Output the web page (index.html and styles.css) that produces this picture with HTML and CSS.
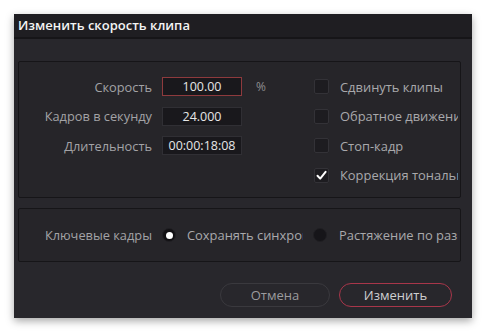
FILE: index.html
```html
<!DOCTYPE html>
<html lang="ru">
<head>
<meta charset="utf-8">
<title>Изменить скорость клипа</title>
<link rel="stylesheet" href="styles.css">
</head>
<body>
<div class="dialog">
  <div class="titlebar">Изменить скорость клипа</div>
  <div class="content">
    <div class="panel panel-top">
      <div class="label">Скорость</div>
      <div class="field field-active">100.00</div>
      <div class="unit">%</div>
      <div class="check"></div>
      <div class="opt">Сдвинуть клипы</div>

      <div class="label">Кадров в секунду</div>
      <div class="field">24.000</div>
      <div class="unit"></div>
      <div class="check"></div>
      <div class="opt">Обратное движение</div>

      <div class="label">Длительность</div>
      <div class="field">00:00:18:08</div>
      <div class="unit"></div>
      <div class="check"></div>
      <div class="opt">Стоп-кадр</div>

      <div class="label"></div>
      <div></div>
      <div></div>
      <div class="check checked"><svg viewBox="0 0 15 15" width="15" height="15"><path d="M3.5 7.8 L6.2 10.6 L11.6 3.8" fill="none" stroke="#ffffff" stroke-width="2" stroke-linecap="round" stroke-linejoin="round"/></svg></div>
      <div class="opt">Коррекция тональности</div>
    </div>
    <div class="panel panel-bottom">
      <div class="label">Ключевые кадры</div>
      <div class="radio selected"></div>
      <div class="opt opt-mid">Сохранять синхронизацию</div>
      <div class="radio"></div>
      <div class="opt">Растяжение по размеру</div>
    </div>
    <div class="buttons">
      <div class="btn btn-cancel">Отмена</div>
      <div class="btn btn-ok">Изменить</div>
    </div>
  </div>
</div>
</body>
</html>
```

FILE: styles.css
```css
* { box-sizing: border-box; }
html, body { margin: 0; padding: 0; background: #ffffff; }
body {
  font-family: "Open Sans", "Noto Sans", sans-serif;
  font-size: 12.8px;
  padding: 14px;
}
.dialog {
  width: 458px;
  height: 304px;
  background: #28272c;
  box-shadow: 0 3px 8px rgba(0, 0, 0, 0.35);
}
.titlebar {
  height: 25px;
  line-height: 23px;
  background: #1f1e22;
  border-bottom: 2px solid #161518;
  color: #f4f4f4;
  font-size: 13px;
  font-weight: 600;
  padding-left: 4px;
}
.content {
  padding: 22px 11px 0 4px;
}
.panel {
  background: #262529;
  border: 1px solid #161518;
  border-radius: 2px;
  display: grid;
  align-items: center;
}
.panel-top {
  height: 137px;
  padding-top: 15px;
  grid-template-columns: 133px 80px 52px 15px 1fr;
  grid-template-rows: repeat(4, 19px);
  column-gap: 10px;
  row-gap: 10.5px;
  align-content: start;
}
.panel-bottom {
  margin-top: 10px;
  height: 54px;
  grid-template-columns: 133px 14px 117px 14px 1fr;
  column-gap: 10px;
}
.label {
  text-align: right;
  color: #a3a3a6;
  white-space: nowrap;
  font-size: 12.8px;
}
.field {
  height: 19px;
  line-height: 17px;
  background: #19181c;
  border: 1px solid #302f34;
  color: #e6e6e6;
  text-align: center;
  font-size: 12.5px;
}
.field-active {
  border-color: #8e3a3d;
}
.unit {
  color: #8d8d90;
  padding-left: 4px;
  font-size: 12px;
}
.check {
  width: 15px;
  height: 15px;
  background: #1d1c20;
  border: 1px solid #333237;
  border-radius: 2px;
  position: relative;
}
.check svg {
  position: absolute;
  left: -1px;
  top: -1px;
}
.opt {
  color: #a9a9ac;
  white-space: nowrap;
  overflow: hidden;
  padding-left: 1px;
  font-size: 12.9px;
}
.panel-top .opt { margin-right: 2px; }
.opt-mid { padding-left: 1px; }
.panel-bottom .opt:last-child { padding-left: 2px; margin-right: 2px; }
.radio {
  width: 14px;
  height: 14px;
  border-radius: 50%;
  background: #161519;
  border: 1px solid #201f23;
  position: relative;
}
.radio.selected {
  background: #111013;
}
.radio.selected::after {
  content: "";
  position: absolute;
  width: 7px;
  height: 7px;
  border-radius: 50%;
  background: #ffffff;
  left: 2.5px;
  top: 2.5px;
}
.buttons {
  margin-top: 21px;
  display: flex;
  justify-content: flex-end;
  gap: 9px;
  padding-right: 9px;
}
.btn {
  height: 24px;
  line-height: 22px;
  border-radius: 12px;
  text-align: center;
  font-size: 13px;
}
.btn-cancel {
  width: 110px;
  border: 1px solid #3a393e;
  color: #9b9b9e;
}
.btn-ok {
  width: 113px;
  border: 1px solid #a8364a;
  color: #cfcfd1;
}
```
